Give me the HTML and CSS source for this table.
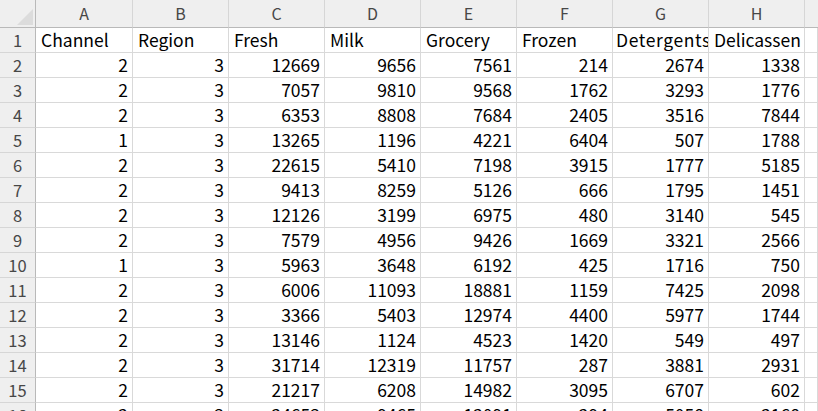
FILE: index.html
```html
<!DOCTYPE html>
<html>
<head>
<meta charset="utf-8">
<link rel="stylesheet" href="styles.css">
</head>
<body>
<div class="sheet">
  <div class="corner"><span class="tri"></span></div>
  <div class="ch">A</div><div class="ch">B</div><div class="ch">C</div><div class="ch">D</div><div class="ch">E</div><div class="ch">F</div><div class="ch">G</div><div class="ch">H</div><div class="ch last"></div>

  <div class="rh">1</div><div class="c t">Channel</div><div class="c t">Region</div><div class="c t">Fresh</div><div class="c t">Milk</div><div class="c t">Grocery</div><div class="c t">Frozen</div><div class="c t clip">Detergents_Paper</div><div class="c t">Delicassen</div><div class="c"></div>

  <div class="rh">2</div><div class="c">2</div><div class="c">3</div><div class="c">12669</div><div class="c">9656</div><div class="c">7561</div><div class="c">214</div><div class="c">2674</div><div class="c">1338</div><div class="c"></div>
  <div class="rh">3</div><div class="c">2</div><div class="c">3</div><div class="c">7057</div><div class="c">9810</div><div class="c">9568</div><div class="c">1762</div><div class="c">3293</div><div class="c">1776</div><div class="c"></div>
  <div class="rh">4</div><div class="c">2</div><div class="c">3</div><div class="c">6353</div><div class="c">8808</div><div class="c">7684</div><div class="c">2405</div><div class="c">3516</div><div class="c">7844</div><div class="c"></div>
  <div class="rh">5</div><div class="c">1</div><div class="c">3</div><div class="c">13265</div><div class="c">1196</div><div class="c">4221</div><div class="c">6404</div><div class="c">507</div><div class="c">1788</div><div class="c"></div>
  <div class="rh">6</div><div class="c">2</div><div class="c">3</div><div class="c">22615</div><div class="c">5410</div><div class="c">7198</div><div class="c">3915</div><div class="c">1777</div><div class="c">5185</div><div class="c"></div>
  <div class="rh">7</div><div class="c">2</div><div class="c">3</div><div class="c">9413</div><div class="c">8259</div><div class="c">5126</div><div class="c">666</div><div class="c">1795</div><div class="c">1451</div><div class="c"></div>
  <div class="rh">8</div><div class="c">2</div><div class="c">3</div><div class="c">12126</div><div class="c">3199</div><div class="c">6975</div><div class="c">480</div><div class="c">3140</div><div class="c">545</div><div class="c"></div>
  <div class="rh">9</div><div class="c">2</div><div class="c">3</div><div class="c">7579</div><div class="c">4956</div><div class="c">9426</div><div class="c">1669</div><div class="c">3321</div><div class="c">2566</div><div class="c"></div>
  <div class="rh">10</div><div class="c">1</div><div class="c">3</div><div class="c">5963</div><div class="c">3648</div><div class="c">6192</div><div class="c">425</div><div class="c">1716</div><div class="c">750</div><div class="c"></div>
  <div class="rh">11</div><div class="c">2</div><div class="c">3</div><div class="c">6006</div><div class="c">11093</div><div class="c">18881</div><div class="c">1159</div><div class="c">7425</div><div class="c">2098</div><div class="c"></div>
  <div class="rh">12</div><div class="c">2</div><div class="c">3</div><div class="c">3366</div><div class="c">5403</div><div class="c">12974</div><div class="c">4400</div><div class="c">5977</div><div class="c">1744</div><div class="c"></div>
  <div class="rh">13</div><div class="c">2</div><div class="c">3</div><div class="c">13146</div><div class="c">1124</div><div class="c">4523</div><div class="c">1420</div><div class="c">549</div><div class="c">497</div><div class="c"></div>
  <div class="rh">14</div><div class="c">2</div><div class="c">3</div><div class="c">31714</div><div class="c">12319</div><div class="c">11757</div><div class="c">287</div><div class="c">3881</div><div class="c">2931</div><div class="c"></div>
  <div class="rh">15</div><div class="c">2</div><div class="c">3</div><div class="c">21217</div><div class="c">6208</div><div class="c">14982</div><div class="c">3095</div><div class="c">6707</div><div class="c">602</div><div class="c"></div>
  <div class="rh">16</div><div class="c">2</div><div class="c">3</div><div class="c">24653</div><div class="c">9465</div><div class="c">12091</div><div class="c">294</div><div class="c">5058</div><div class="c">2168</div><div class="c"></div>
</div>
</body>
</html>
```

FILE: styles.css
```css
html, body {
  margin: 0;
  padding: 0;
  background: #ffffff;
  overflow: hidden;
}
.sheet {
  display: grid;
  grid-template-columns: 36px 97px repeat(7, 96px) 1fr;
  grid-template-rows: 28px repeat(16, 25px);
  width: 818px;
  height: 411px;
  overflow: hidden;
  font-family: "Noto Sans CJK JP", "Noto Sans", sans-serif;
}
.corner {
  position: relative;
  background: #efefef;
  border-right: 1px solid #b9b9b9;
  border-bottom: 1px solid #b9b9b9;
  box-sizing: border-box;
}
.tri {
  position: absolute;
  right: 2px;
  bottom: 2px;
  width: 0;
  height: 0;
  border-left: 16px solid transparent;
  border-bottom: 16px solid #dcdcdc;
}
.ch {
  box-sizing: border-box;
  background: #efefef;
  border-right: 1px solid #d6d6d6;
  border-bottom: 1px solid #b9b9b9;
  color: #474747;
  font-size: 16px;
  line-height: 27px;
  text-align: center;
}
.ch.last {
  border-right: none;
}
.rh {
  box-sizing: border-box;
  background: #efefef;
  border-right: 1px solid #b9b9b9;
  border-bottom: 1px solid #d6d6d6;
  color: #474747;
  font-size: 16.5px;
  line-height: 24px;
  text-align: center;
}
.c {
  box-sizing: border-box;
  border-right: 1px solid #d9d9d9;
  border-bottom: 1px solid #d9d9d9;
  color: #000;
  font-size: 17.5px;
  line-height: 24px;
  text-align: right;
  padding: 0 4px 0 4px;
  white-space: nowrap;
  overflow: hidden;
}
.c.t {
  text-align: left;
  padding-left: 5px;
}
.c.clip {
  padding-right: 0;
  padding-left: 3px;
  letter-spacing: 0.6px;
  text-overflow: clip;
}
```
